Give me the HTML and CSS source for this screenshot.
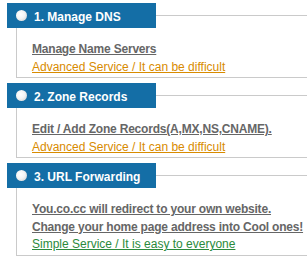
FILE: index.html
```html
<!DOCTYPE html>
<html lang="en">
<head>
    <meta charset="UTF-8">
    <meta name="viewport" content="width=device-width, initial-scale=1.0">
    <title>Domain Services</title>
    <link rel="stylesheet" href="styles.css">
</head>
<body>
    <div class="section">
        <div class="head">
            <div class="tab"><span class="dot"></span><span class="title">1. Manage DNS</span></div>
            <div class="rule"></div>
        </div>
        <div class="box">
            <a href="#" class="main">Manage Name Servers</a>
            <a href="#" class="hard">Advanced Service / It can be difficult</a>
        </div>
    </div>

    <div class="section">
        <div class="head">
            <div class="tab"><span class="dot"></span><span class="title">2. Zone Records</span></div>
            <div class="rule"></div>
        </div>
        <div class="box">
            <a href="#" class="main">Edit / Add Zone Records(A,MX,NS,CNAME).</a>
            <a href="#" class="hard">Advanced Service / It can be difficult</a>
        </div>
    </div>

    <div class="section">
        <div class="head">
            <div class="tab"><span class="dot"></span><span class="title">3. URL Forwarding</span></div>
            <div class="rule"></div>
        </div>
        <div class="box">
            <a href="#" class="main">You.co.cc will redirect to your own website.</a>
            <a href="#" class="main">Change your home page address into Cool ones!</a>
            <a href="#" class="easy">Simple Service / It is easy to everyone</a>
        </div>
    </div>
</body>
</html>
```

FILE: styles.css
```css
body {
    margin: 0;
    padding-top: 3px;
    font-family: "Liberation Sans", Arial, sans-serif;
    font-size: 12px;
    background-color: #fff;
    overflow: hidden;
}

.section {
    margin-bottom: 5px;
}

.head {
    display: flex;
    align-items: center;
    height: 25px;
}

.tab {
    width: 149px;
    height: 25px;
    margin-left: 7px;
    padding-left: 9px;
    box-sizing: border-box;
    background-color: #146ea6;
    display: flex;
    align-items: center;
}

.dot {
    width: 11px;
    height: 11px;
    border-radius: 50%;
    background: radial-gradient(circle at 40% 40%, #fff 0, #f4f4f4 45%, #c9c9c9 100%);
}

.title {
    color: #fff;
    font-weight: bold;
    margin-left: 7px;
    padding-top: 3px;
}

.rule {
    flex: 1;
    height: 1px;
    background-color: #cacaca;
}

.box {
    margin-left: 16px;
    border-left: 1px solid #cacaca;
    border-bottom: 1px solid #cacaca;
    padding: 13px 0 1px 15px;
    line-height: 17.5px;
}

.box a {
    display: block;
    width: fit-content;
    white-space: nowrap;
}

.main {
    color: #666;
    font-weight: bold;
    letter-spacing: -0.2px;
}

.hard {
    color: #d88b00;
}

.easy {
    color: #2b8a3c;
}
```
